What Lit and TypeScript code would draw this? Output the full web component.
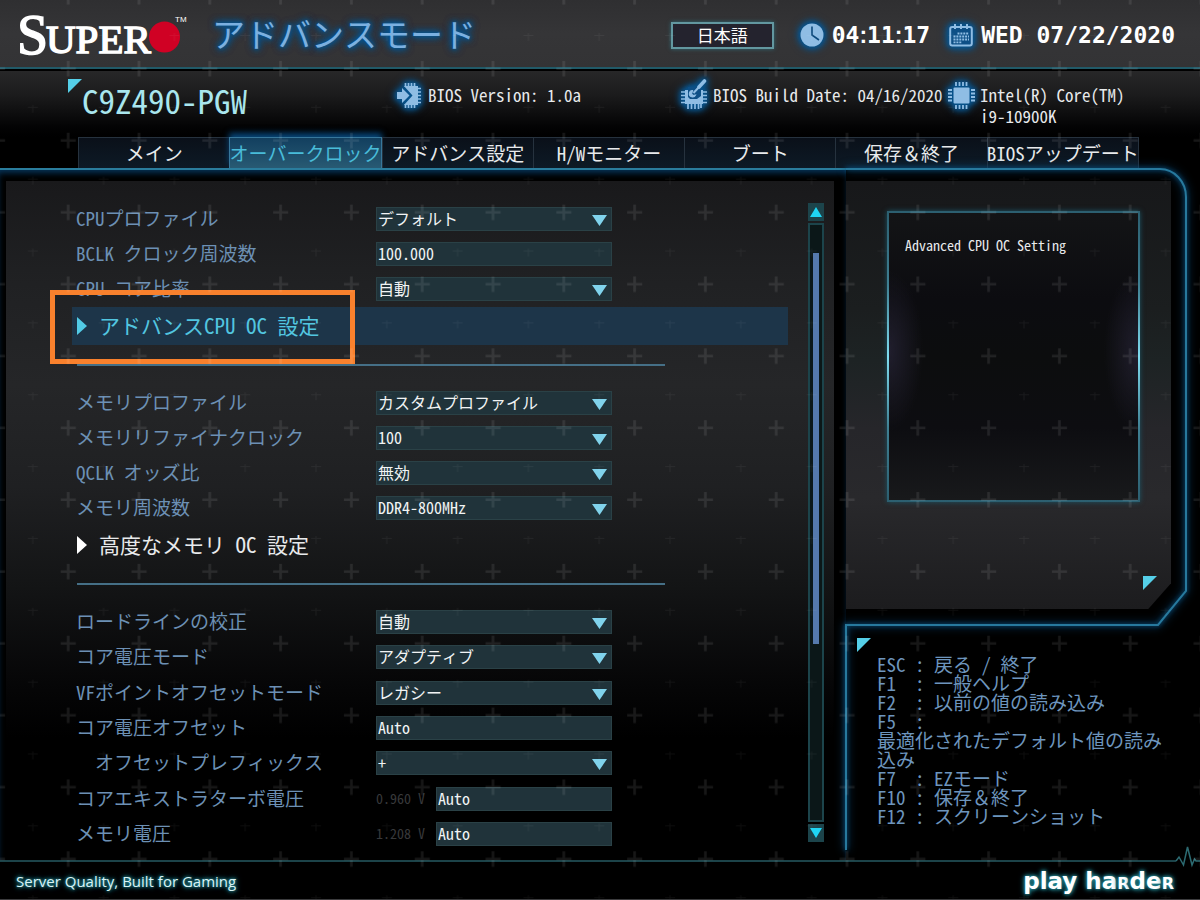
import { LitElement, html, css, svg, nothing } from "lit";
import { customElement, state } from "lit/decorators.js";
import { classMap } from "lit/directives/class-map.js";

type Field = {
  kind: "select" | "text";
  id: string;
  label: string;
  value: string;
  reading?: string;
  indent?: boolean;
};

const TABS = [
  "メイン",
  "オーバークロック",
  "アドバンス設定",
  "H/Wモニター",
  "ブート",
  "保存＆終了",
  "BIOSアップデート",
];

const CPU_FIELDS: Field[] = [
  { kind: "select", id: "cpu-profile", label: "CPUプロファイル", value: "デフォルト" },
  { kind: "text", id: "bclk", label: "BCLK クロック周波数", value: "100.000" },
  { kind: "select", id: "core-ratio", label: "CPU コア比率", value: "自動" },
];

const MEMORY_FIELDS: Field[] = [
  { kind: "select", id: "mem-profile", label: "メモリプロファイル", value: "カスタムプロファイル" },
  { kind: "select", id: "mem-ref", label: "メモリリファイナクロック", value: "100" },
  { kind: "select", id: "qclk", label: "QCLK オッズ比", value: "無効" },
  { kind: "select", id: "mem-freq", label: "メモリ周波数", value: "DDR4-800MHz" },
];

const VOLTAGE_FIELDS: Field[] = [
  { kind: "select", id: "loadline", label: "ロードラインの校正", value: "自動" },
  { kind: "select", id: "core-mode", label: "コア電圧モード", value: "アダプティブ" },
  { kind: "select", id: "vf-mode", label: "VFポイントオフセットモード", value: "レガシー" },
  { kind: "text", id: "core-offset", label: "コア電圧オフセット", value: "Auto" },
  { kind: "select", id: "offset-prefix", label: "オフセットプレフィックス", value: "+", indent: true },
  { kind: "text", id: "turbo-volt", label: "コアエキストラターボ電圧", value: "Auto", reading: "0.960 V" },
  { kind: "text", id: "mem-volt", label: "メモリ電圧", value: "Auto", reading: "1.208 V" },
];

const KEYS = `ESC : 戻る / 終了
F1  : 一般ヘルプ
F2  : 以前の値の読み込み
F5  :
最適化されたデフォルト値の読み込み
F7  : EZモード
F10 : 保存＆終了
F12 : スクリーンショット`;

const clockIcon = svg`
  <circle cx="12" cy="12" r="11.5" fill="#8fbde4"/>
  <path d="M12 3.5V12l7 5" fill="none" stroke="#0d4a7c" stroke-width="1.6"/>`;

const calendarIcon = svg`
  <rect x="1.2" y="4" width="21.6" height="18.6" rx="2" fill="#0d4f86" stroke="#8fbde4" stroke-width="2"/>
  <path d="M6 1v5M12 1v5M18 1v5" stroke="#8fbde4" stroke-width="2"/>
  <path d="M8.5 10.5H20M4.5 13.5H20M4.5 16.5H20M4.5 19.3H13" stroke="#8fbde4" stroke-width="1.8" stroke-dasharray="2 .9"/>`;

const cpuIcon = svg`
  <rect x="5.5" y="5.5" width="16" height="16" rx="1" fill="#8fbde4"/>
  <path d="M8 0v4M11.5 0v4M15 0v4M18.5 0v4M8 23v4M11.5 23v4M15 23v4M18.5 23v4M0 8h4M0 11.5h4M0 15h4M0 18.5h4M23 8h4M23 11.5h4M23 15h4M23 18.5h4" stroke="#8fbde4" stroke-width="1.8"/>`;

const versionIcon = svg`
  <path d="M8 4H22V23H8L16.500 13.500Z" fill="#8fbde4"/>
  <path d="M1 10H6V6L13.500 13.500L6 21V17H1Z" fill="#8fbde4"/>
  <path d="M9.500 1v4M12.500 1v4M15.500 1v4M18.500 1v4M9.500 22v4M12.500 22v4M15.500 22v4M18.500 22v4M22 6.500h3M22 10h3M22 13.500h3M22 17h3M22 20.500h3" stroke="#8fbde4" stroke-width="1.700"/>`;

const buildIcon = svg`
  <path d="M4 8H22V22H4Z" fill="#8fbde4"/>
  <path d="M7 22v5M10.500 22v5M14 22v5M17.500 22v5M20 22v4M0 10h4M0 13.500h4M0 17h4M0 20.500h4M22 10h4M22 13.500h4M22 17h4M22 20.500h4" stroke="#8fbde4" stroke-width="1.700"/>
  <path d="M7 5H20V14L16 17H9L7 15Z" fill="#0d4f86"/>
  <path d="M23.500 -1L18 5" stroke="#8fbde4" stroke-width="3.600" stroke-linecap="round"/>
  <path d="M18 5L12.500 11" stroke="#8fbde4" stroke-width="2"/>
  <path d="M11.500 8.500A3.200 3.200 0 1 0 14.500 13L12 13.500L10.500 12Z" fill="#8fbde4" stroke="#8fbde4" stroke-width="1.200"/>`;

@customElement("app-root")
class AppRoot extends LitElement {
  @state() private tab = 1;

  static styles = css`
    :host {
      display: block;
      background: #000;
      color: #e8eaec;
      font-family: "Noto Sans Mono CJK JP", "Noto Sans CJK JP", monospace;
    }
    * { box-sizing: border-box; }
    button, input, select { font: inherit; color: inherit; margin: 0; padding: 0; border: 0; border-radius: 0; }
    button { background: none; cursor: pointer; }

    .screen {
      position: relative;
      display: flex;
      flex-direction: column;
      min-height: 100vh;
      overflow: hidden;
      border-bottom: 1px solid #3c3c3e;
    }
    .grid {
      position: absolute;
      inset: 0;
      width: 100%;
      height: 100%;
      pointer-events: none;
    }
    .glow {
      overflow: visible;
      flex: none;
      filter: drop-shadow(0 0 2px #08538c) drop-shadow(0 0 3px #08538c) drop-shadow(0 0 3px #08538c);
    }

    header {
      display: flex;
      align-items: center;
      height: 69px;
      padding: 0 25px 0 16px;
      background: linear-gradient(#2f2f31, #353537 50%, #333335);
      border-bottom: 2px solid #215a68;
    }
    .logo { flex: none; overflow: visible; }
    .logo text { font-family: "Liberation Serif", serif; fill: #fff; stroke: #fff; stroke-width: 1.5px; }
    .logo .tm { font-family: "Liberation Sans", sans-serif; font-size: 8px; stroke-width: 0; }
    h1 {
      margin: 0 auto 0 24px;
      font-size: 33px;
      line-height: 40px;
      padding-bottom: 2px;
      font-weight: 400;
      color: #7bb0e0;
      white-space: nowrap;
      text-shadow: 0 0 3px #08538c, 0 0 5px #08538c, 0 0 7px #08538c, 0 0 9px #08538c, 0 0 9px #08538c;
    }
    .lang {
      width: 103px;
      height: 27px;
      margin: 4px 26px 0 0;
      padding-bottom: 2px;
      font-size: 17px;
      font-weight: 500;
      line-height: 20px;
      background: #24232e;
      border: 2px solid #6297a0;
      box-shadow: 0 0 4px #2f6a76;
      color: #fff;
    }
    .stamp {
      display: flex;
      align-items: center;
      gap: 8px;
      padding-top: 2px;
      color: #fff;
      font: 700 23px/28px "DejaVu Sans Mono", monospace;
      white-space: nowrap;
    }
    .stamp + .stamp { margin-left: 19px; }
    .colon { font-family: "Liberation Sans", sans-serif; }

    .info {
      display: grid;
      grid-template-columns: 328fr 285fr 267fr 252fr;
      min-height: 66px;
      margin-top: 2px;
      padding: 8px 0 0 68px;
      background: linear-gradient(#272728, #1c1c1d 35%, #030304 85%, #000);
      font-size: 17px;
      line-height: 21px;
    }
    .model { display: flex; align-items: flex-start; font-size: 33px; line-height: 42px; color: #a9e6ee; }
    .model h2 { margin: 0; font: inherit; }
    .corner { width: 14px; height: 14px; flex: none; background: #55cfe8; clip-path: polygon(0 0, 100% 0, 0 100%); }
    .fact { display: flex; gap: 5px; align-items: flex-start; white-space: nowrap; }
    .fact p { margin: 5px 0 0; }
    .fact .glow { margin-top: 3px; }

    nav { display: flex; padding: 0 61px 0 78px; }
    .tab {
      flex: 1 1 0;
      min-width: 0;
      height: 31px;
      display: flex;
      justify-content: center;
      font-size: 19px;
      line-height: 30px;
      white-space: nowrap;
      background: linear-gradient(#0a1019, #0d1a26);
      border: 1px solid #26323e;
      border-right-width: 0;
      border-bottom: 0;
    }
    .tab:last-child { border-right-width: 1px; }
    .tab.on {
      color: #49bcd9;
      background: linear-gradient(#123f5f, #285a73);
      border-color: #37779b;
      border-right-width: 1px;
      box-shadow: 0 -4px 6px #07467a;
    }

    main { flex: 1; display: flex; position: relative; }
    .left {
      flex: 1;
      min-width: 0;
      display: flex;
      padding: 11px 12px 0 6px;
      border-top: 2px solid #2a7d9d;
      box-shadow: inset 0 5px 6px -2px #06345a;
    }
    .panel {
      flex: 1;
      min-width: 0;
      display: flex;
      padding: 0 10px 0 70px;
      background: linear-gradient(#19191b, #202123 15%, #252628 30%, #1f2022 45%, #131415 60%, #050506 75%, #000 82%);
    }
    form { flex: 1; min-width: 0; display: flex; flex-direction: column; padding: 26px 0 14px; }
    .group { display: flex; flex-direction: column; gap: 11px; }
    .group.rest { flex: 1; justify-content: space-between; }
    .row { display: grid; grid-template-columns: 300px 236px; height: 24px; align-items: start; }
    label { font-size: 19px; line-height: 22px; color: #6c90b4; white-space: nowrap; }
    .indent { padding-left: 19px; }
    .cell { display: flex; height: 24px; }
    .reading { flex: none; width: 60px; font-size: 14px; line-height: 22px; color: #38393b; }
    .box {
      flex: 1;
      min-width: 0;
      width: 100%;
      height: 24px;
      padding: 0 0 2px 1px;
      font-size: 16px;
      line-height: 20px;
      color: #f1f3f4;
      background-color: #20333a;
      border: 1px solid #2a4146;
      appearance: none;
    }
    select.box {
      background-image: url("data:image/svg+xml,%3Csvg xmlns='http://www.w3.org/2000/svg' width='16' height='12'%3E%3Cpath d='M0 0h15L7.5 11z' fill='%2380d3ec'/%3E%3C/svg%3E");
      background-repeat: no-repeat;
      background-position: right 3px top 7px;
    }
    .sub {
      position: relative;
      display: flex;
      align-items: center;
      gap: 12px;
      height: 38px;
      margin: 6px 0 0 -4px;
      padding: 0 0 0 5px;
      font-size: 21px;
      line-height: 30px;
      text-align: left;
      white-space: nowrap;
    }
    .sub .name { padding-bottom: 2px; }
    .sub.on { background: #1d3549; color: #52c6e0; }
    .mark {
      position: absolute;
      left: -22px;
      top: -17px;
      width: 305px;
      height: 74px;
      border: 5px solid #f9812d;
    }
    hr { height: 2px; margin: 19px 123px 25px 1px; border: 0; background: #456f86; }

    .scroll { flex: none; width: 16px; margin: 22px 0 18px 20px; display: flex; flex-direction: column; gap: 2px; }
    .step { height: 18px; display: flex; align-items: center; justify-content: center; background: #1c444b; }
    .track { flex: 1; padding: 28px 4px 0; background: #0b1718; border: 2px solid #1c444b; }
    .thumb { height: 69%; background: #5579ac; margin: 0 -1px; }

    aside { position: relative; flex: none; width: 354px; padding-top: 13px; }
    .frame {
      position: absolute;
      left: 0;
      top: 0;
      overflow: visible;
      pointer-events: none;
      filter: drop-shadow(0 0 2px #0b5c8e) drop-shadow(0 0 4px #07406b);
    }
    .tip {
      position: relative;
      display: flex;
      flex-direction: column;
      margin-right: 29px;
      padding: 30px 14px 19px 41px;
      background: linear-gradient(#17181a, #1b1e1f 30%, #1d2324 42%, #26262a 58%, #29292c 74%, #1c1c1e);
      clip-path: polygon(0 0, 100% 0, 100% 94%, 93% 100%, 0 100%);
    }
    .tip-box {
      min-height: 291px;
      width: 253px;
      padding: 22px 16px;
      border: 2px solid;
      border-image: linear-gradient(#2c5f70, #3f7f92 25%, #7fdcf0 50%, #3f7f92 75%, #2c5f70) 1;
      box-shadow: 0 0 5px #1c5565;
      background:
        radial-gradient(ellipse 34px 80px at 0 48%, #201e2d, transparent),
        radial-gradient(ellipse 34px 80px at 100% 48%, #201e2d, transparent),
        linear-gradient(#131416, #0c0c10 30%, #0c0d0e 50%, #0d0d11 75%, #18191b);
      font-size: 14px;
      line-height: 20px;
    }
    .tip-box p { margin: 0; white-space: nowrap; }
    .tip .corner { align-self: flex-end; margin-top: 74px; }
    .keys { padding: 29px 0 0 11px; }
    .keys pre {
      margin: 2px 32px 0 20px;
      font: inherit;
      font-size: 19px;
      line-height: 19px;
      color: #6d95bd;
      white-space: pre-wrap;
    }

    .rule { display: flex; height: 2px; }
    .line { flex: 1; background: #1c4349; }
    .rule svg { flex: none; overflow: visible; }
    footer { display: flex; justify-content: space-between; align-items: center; height: 37px; padding: 0 26px 0 16px; white-space: nowrap; }
    .motto { font: 400 15px/24px "Open Sans", sans-serif; color: #d9f3f6; text-shadow: 0 0 3px #2b98a4, 0 0 5px #1d7480, 0 0 6px #1d7480; }
    .play { font: 700 23px/28px "DejaVu Sans", sans-serif; color: #fff; text-shadow: 0 0 3px #2b98a4, 0 0 5px #1d7480, 0 0 6px #1d7480; }
    .small-cap { font-variant-caps: small-caps; }
  `;

  private renderField(f: Field) {
    return html`
      <div class="row">
        <label for=${f.id} class=${classMap({ indent: !!f.indent })}>${f.label}</label>
        <div class="cell">
          ${f.reading ? html`<span class="reading">${f.reading}</span>` : nothing}
          ${f.kind === "select"
            ? html`<select class="box" id=${f.id}><option>${f.value}</option></select>`
            : html`<input class="box" id=${f.id} type="text" .value=${f.value} />`}
        </div>
      </div>`;
  }

  private renderIcon(size: number, shape: unknown) {
    return html`<svg class="glow" width=${size} height=${size} viewBox="0 0 ${size} ${size}" aria-hidden="true">${shape}</svg>`;
  }

  render() {
    return html`
      <div class="screen">
        <header>
          <svg class="logo" width="172" height="44" viewBox="0 0 172 44">
            <text x="1" y="42" font-size="56">S</text>
            <text x="30" y="41" font-size="41">UPER</text>
            <circle cx="148.500" cy="25" r="15.500" fill="#d00124"/>
            <text class="tm" x="159" y="10">TM</text>
          </svg>
          <h1>アドバンスモード</h1>
          <button class="lang" type="button">日本語</button>
          <div class="stamp">
            ${this.renderIcon(24, clockIcon)}
            <time>04<span class="colon">:</span>11<span class="colon">:</span>17</time>
          </div>
          <div class="stamp">${this.renderIcon(24, calendarIcon)}<time>WED 07/22/2020</time></div>
        </header>

        <section class="info">
          <div class="model"><span class="corner"></span><h2>C9Z490-PGW</h2></div>
          <div class="fact">${this.renderIcon(27, versionIcon)}<p>BIOS Version: 1.0a</p></div>
          <div class="fact">${this.renderIcon(27, buildIcon)}<p>BIOS Build Date: 04/16/2020</p></div>
          <div class="fact">${this.renderIcon(27, cpuIcon)}<p>Intel(R) Core(TM)<br />i9-10900K</p></div>
        </section>

        <nav role="tablist">
          ${TABS.map((name, i) => html`
            <button type="button" role="tab" aria-selected=${i === this.tab}
              class=${classMap({ tab: true, on: i === this.tab })}
              @click=${() => (this.tab = i)}>${name}</button>`)}
        </nav>

        <main>
          <div class="left">
            <div class="panel">
              <form>
                <div class="group">${CPU_FIELDS.map((f) => this.renderField(f))}</div>
                <button class="sub on" type="button">
                  <svg width="10" height="18" viewBox="0 0 10 18" aria-hidden="true"><path d="M0 0L10 9L0 18Z" fill="#52cbe6"/></svg>
                  <span class="name">アドバンスCPU OC 設定</span>
                  <span class="mark"></span>
                </button>
                <hr />
                <div class="group">${MEMORY_FIELDS.map((f) => this.renderField(f))}</div>
                <button class="sub" type="button">
                  <svg width="10" height="18" viewBox="0 0 10 18" aria-hidden="true"><path d="M0 0L10 9L0 18Z" fill="#fff"/></svg>
                  <span class="name">高度なメモリ OC 設定</span>
                </button>
                <hr />
                <div class="group rest">${VOLTAGE_FIELDS.map((f) => this.renderField(f))}</div>
              </form>
              <div class="scroll">
                <button class="step" type="button" aria-label="上へ">
                  <svg width="12" height="10" viewBox="0 0 12 10"><path d="M6 0L12 10H0Z" fill="#1fd6f5"/></svg>
                </button>
                <div class="track"><div class="thumb"></div></div>
                <button class="step" type="button" aria-label="下へ">
                  <svg width="12" height="10" viewBox="0 0 12 10"><path d="M0 0H12L6 10Z" fill="#1fd6f5"/></svg>
                </button>
              </div>
            </div>
          </div>

          <aside>
            <svg class="frame" width="354" height="690" viewBox="0 0 354 690" aria-hidden="true">
              <path d="M0 1H314A26 28 0 0 1 340 29V423L312 457H0V682" fill="none" stroke="#27799d" stroke-width="2"/>
            </svg>
            <div class="tip">
              <div class="tip-box"><p>Advanced CPU OC Setting</p></div>
              <span class="corner"></span>
            </div>
            <div class="keys">
              <div class="corner"></div>
              <pre>${KEYS}</pre>
            </div>
          </aside>
        </main>

        <div class="rule">
          <div class="line"></div>
          <svg width="24" height="2" viewBox="0 0 24 2" aria-hidden="true">
            <path d="M0 1L3 -3L7.500 5L11.500 -13L16 5L18.500 -1L20 1H24" fill="none" stroke="#2c6b72" stroke-width="1.500"/>
          </svg>
        </div>
        <footer>
          <span class="motto">Server Quality, Built for Gaming</span>
          <span class="play">play ha<span class="small-cap">r</span>de<span class="small-cap">r</span></span>
        </footer>

        <svg class="grid" aria-hidden="true">
          <defs>
            <pattern id="plus" x="32.800" y="33" width="70.800" height="71.850" patternUnits="userSpaceOnUse">
              <path d="M28 35.700H43M35.400 28V43.500" stroke="#fff" stroke-opacity=".09" stroke-width="2.600"/>
              <path d="M0 2.500H5M66 2.500H71M0 0V8M70.800 0V8" stroke="#fff" stroke-opacity=".05" stroke-width="1"/>
            </pattern>
          </defs>
          <rect width="100%" height="100%" fill="url(#plus)"/>
        </svg>
      </div>`;
  }
}
